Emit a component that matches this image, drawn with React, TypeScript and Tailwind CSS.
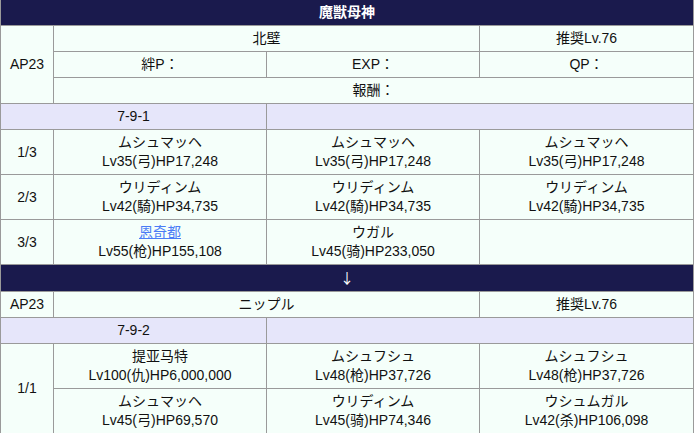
const cell = 'border border-[#9a9a9a] bg-[#f5fffa] px-1 py-[3px] text-center align-middle leading-[19px]'
const band = 'border border-[#9a9a9a] bg-[#e6e6fa] px-1 py-[3px] text-center leading-[19px]'
const head = 'border-x border-b border-[#9a9a9a] bg-[#1a1a4d] px-1 py-[3px] text-center font-bold text-white leading-[19px]'

type Enemy = { name: string; stats: string; link?: boolean }

function EnemyCell({ e }: { e?: Enemy }) {
  if (!e) return <td className={cell}></td>
  return (
    <td className={cell}>
      <div>
        {e.link ? (
          <a href="#" className="text-[#4a7cf6] underline">{e.name}</a>
        ) : (
          e.name
        )}
      </div>
      <div>{e.stats}</div>
    </td>
  )
}

const musyu = { name: 'ムシュマッヘ', stats: 'Lv35(弓)HP17,248' }
const uri = { name: 'ウリディンム', stats: 'Lv42(騎)HP34,735' }

const waves1: { label: string; enemies: (Enemy | undefined)[] }[] = [
  { label: '1/3', enemies: [musyu, musyu, musyu] },
  { label: '2/3', enemies: [uri, uri, uri] },
  {
    label: '3/3',
    enemies: [
      { name: '恩奇都', stats: 'Lv55(枪)HP155,108', link: true },
      { name: 'ウガル', stats: 'Lv45(骑)HP233,050' },
      undefined,
    ],
  },
]

export default function App() {
  return (
    <div className="bg-white" style={{ fontFamily: '"Liberation Sans", "Noto Sans CJK JP", sans-serif' }}>
      <table className="w-[693px] table-fixed border-collapse text-[14px] text-[#111]">
        <colgroup>
          <col className="w-[53px]" />
          <col className="w-[213px]" />
          <col className="w-[213px]" />
          <col className="w-[214px]" />
        </colgroup>
        <tbody>
          <tr>
            <th colSpan={4} className={head}>魔獣母神</th>
          </tr>
          <tr>
            <td rowSpan={3} className={cell}>AP23</td>
            <td colSpan={2} className={cell}>北壁</td>
            <td className={cell}>推奨Lv.76</td>
          </tr>
          <tr>
            <td className={cell}>絆P：</td>
            <td className={cell}>EXP：</td>
            <td className={cell}>QP：</td>
          </tr>
          <tr>
            <td colSpan={3} className={cell}>報酬：</td>
          </tr>
          <tr>
            <td colSpan={2} className={band}>7-9-1</td>
            <td colSpan={2} className={band}></td>
          </tr>
          {waves1.map((w) => (
            <tr key={w.label}>
              <td className={cell}>{w.label}</td>
              {w.enemies.map((e, i) => (
                <EnemyCell key={i} e={e} />
              ))}
            </tr>
          ))}
          <tr>
            <td colSpan={4} className={head}>
              <span className="font-normal" style={{ fontFamily: '"Noto Sans CJK JP", sans-serif' }}>↓</span>
            </td>
          </tr>
          <tr>
            <td className={cell}>AP23</td>
            <td colSpan={2} className={cell}>ニップル</td>
            <td className={cell}>推奨Lv.76</td>
          </tr>
          <tr>
            <td colSpan={2} className={band}>7-9-2</td>
            <td colSpan={2} className={band}></td>
          </tr>
          <tr>
            <td rowSpan={2} className={cell}>1/1</td>
            <EnemyCell e={{ name: '提亚马特', stats: 'Lv100(仇)HP6,000,000' }} />
            <EnemyCell e={{ name: 'ムシュフシュ', stats: 'Lv48(枪)HP37,726' }} />
            <EnemyCell e={{ name: 'ムシュフシュ', stats: 'Lv48(枪)HP37,726' }} />
          </tr>
          <tr>
            <EnemyCell e={{ name: 'ムシュマッヘ', stats: 'Lv45(弓)HP69,570' }} />
            <EnemyCell e={{ name: 'ウリディンム', stats: 'Lv45(骑)HP74,346' }} />
            <EnemyCell e={{ name: 'ウシュムガル', stats: 'Lv42(杀)HP106,098' }} />
          </tr>
        </tbody>
      </table>
    </div>
  )
}
